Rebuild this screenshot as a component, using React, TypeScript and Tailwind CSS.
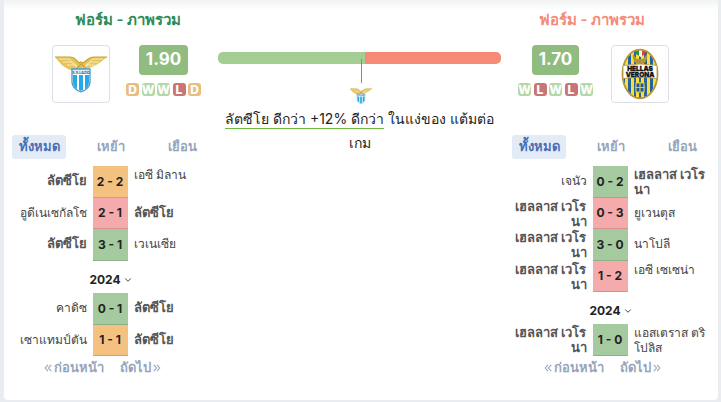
import { ChevronDown } from "lucide-react";

type Result = "W" | "D" | "L";
type Match = {
  home: string[];
  away: string[];
  score: string;
  result: Result;
  strong: "home" | "away";
};

const LAZIO = ["ลัตซีโย"];
const VERONA = ["เฮลลาส เวโร", "นา"];

const lazioRecent: Match[] = [
  { home: LAZIO, away: ["เอซี มิลาน", "\u00a0"], score: "2 - 2", result: "D", strong: "home" },
  { home: ["อูดีเนเซกัลโช"], away: LAZIO, score: "2 - 1", result: "L", strong: "away" },
  { home: LAZIO, away: ["เวเนเซีย"], score: "3 - 1", result: "W", strong: "home" },
];
const lazioOlder: Match[] = [
  { home: ["คาดิซ"], away: LAZIO, score: "0 - 1", result: "W", strong: "away" },
  { home: ["เซาแทมป์ตัน"], away: LAZIO, score: "1 - 1", result: "D", strong: "away" },
];
const veronaRecent: Match[] = [
  { home: ["เจนัว"], away: VERONA, score: "0 - 2", result: "W", strong: "away" },
  { home: VERONA, away: ["ยูเวนตุส"], score: "0 - 3", result: "L", strong: "home" },
  { home: VERONA, away: ["นาโปลี"], score: "3 - 0", result: "W", strong: "home" },
  { home: VERONA, away: ["เอซี เซเซน่า", "\u00a0"], score: "1 - 2", result: "L", strong: "home" },
];
const veronaOlder: Match[] = [
  { home: VERONA, away: ["แอสเตราส ตริ", "โปลิส"], score: "1 - 0", result: "W", strong: "home" },
];

const cellColor: Record<Result, string> = {
  W: "bg-[#a6ca9f] border-[#8db087]",
  D: "bg-[#f5c180] border-[#d2a264]",
  L: "bg-[#f5abab] border-[#d88f8f]",
};
const badgeColor: Record<Result, string> = {
  W: "bg-[#b5d6a7]",
  D: "bg-[#e9bd7c]",
  L: "bg-[#c87575]",
};

function LazioCrest({ className }: { className: string }) {
  return (
    <svg viewBox="0 0 52 52" className={className} aria-label="Lazio">
      <path d="M0 9h14c5 0 7 3 10 6l2-1 2 1c4-3 6-6 11-6h13l-5 4-4 3-4 2-5 2-5 1-3 2H18l-5-2-5-3-4-4Z" fill="#e5c45d" />
      <path d="M4 11h10l8 7M8 14h8l6 5M12 17h7l4 3M48 11H38l-8 7M44 14h-8l-6 5M40 17h-7l-4 3" stroke="#f8e9ae" fill="none" />
      <path d="M0 9h15c5 0 6 3 9 6l2-1 2 1c4-3 6-6 11-6h13M22 20l4-4 5 4" stroke="#c8a22f" fill="none" strokeWidth="1.2" />
      <path d="M17 21h18v13c0 5-4 8-9 10-5-2-9-5-9-10Z" fill="#fff" stroke="#4b98c5" strokeWidth="1.3" />
      <path d="M18 27h4v14c-3-2-4-4-4-7Zm12 0h4v7c0 3-1 5-4 7ZM24 27h4v15l-2 1-2-1Z" fill="#26a9e5" />
      <path d="M18 22h16v4H18Z" fill="#dceefa" />
      <text x="26" y="25.500" textAnchor="middle" fontSize="3.500" fontWeight="700" fill="#356583" fontFamily="Inter, sans-serif">S.S.LAZIO</text>
    </svg>
  );
}

function VeronaCrest({ className }: { className: string }) {
  return (
    <svg viewBox="0 0 52 52" className={className} aria-label="Hellas Verona">
      <clipPath id="shield"><ellipse cx="26" cy="26" rx="17" ry="24" /></clipPath>
      <g clipPath="url(#shield)">
        <path d="M8 0h36v52H8Z" fill="#2463a0" />
        <path d="M11 0h3v52h-3Zm6 0h3v52h-3Zm5 0h3v52h-3Zm5 0h3v52h-3Zm6 0h3v52h-3Zm6 0h3v52h-3Z" fill="#f7df3e" />
        <path d="M19 6c-1 6 2 10 7 11 5-1 8-5 7-11l-4 5h-6Z" fill="#b89335" />
        <path d="M22 1h3v7l-3-2Z" fill="#249552" />
        <path d="M25 1h3v7l-1.500 1L25 8Z" fill="#fff" />
        <path d="M28 1h3v5l-3 2Z" fill="#df3f38" />
        <path d="M22 35h8v9h-8Z" fill="#1d5b9c" />
        <path d="M21 39.500h10M26 34v10M22 35h8v9h-8Z" stroke="#e1c83b" fill="none" strokeWidth="1.200" />
      </g>
      <ellipse cx="26" cy="26" rx="17.500" ry="24.300" fill="none" stroke="#b8943d" strokeWidth="1.800" />
      <path d="M9 17.500q17-3 34 0v13q-17-3-34 0Z" fill="#fff" stroke="#b8943d" strokeWidth=".8" />
      <text x="26" y="22.500" textAnchor="middle" fontSize="6.500" fontWeight="900" fill="#111" stroke="#111" strokeWidth=".3" fontFamily="Inter, sans-serif">HELLAS</text>
      <text x="26" y="29" textAnchor="middle" fontSize="6.500" fontWeight="900" fill="#111" stroke="#111" strokeWidth=".3" fontFamily="Inter, sans-serif">VERONA</text>
    </svg>
  );
}

function DoubleChevron({ className = "" }: { className?: string }) {
  return (
    <svg viewBox="0 0 10 10" className={`h-2 w-2 ${className}`} fill="none" stroke="currentColor" strokeWidth="1.4" aria-hidden="true">
      <path d="M5 1 1.500 5 5 9M9 1 5.500 5 9 9" />
    </svg>
  );
}

function Rating({ value, form }: { value: string; form: Result[] }) {
  return (
    <div className="flex w-[75px] flex-col items-center gap-2">
      <div className="flex h-[30px] items-center rounded bg-[#90bc80] px-[7px] text-[17px] font-bold text-white">{value}</div>
      <div className="flex w-full justify-between">
        {form.map((r, i) => (
          <span key={i} className={`flex h-[13px] w-[13px] items-center justify-center rounded-[3px] text-xs font-extrabold text-white ${badgeColor[r]}`}>{r}</span>
        ))}
      </div>
    </div>
  );
}

function Crest({ team }: { team: "lazio" | "verona" }) {
  return (
    <div className="flex h-[58px] w-[58px] shrink-0 items-center justify-center rounded border border-[#dcdfe7]">
      {team === "lazio" ? <LazioCrest className="h-[52px] w-[52px]" /> : <VeronaCrest className="h-[52px] w-[52px]" />}
    </div>
  );
}

function TeamCell({ lines, strong, className }: { lines: string[]; strong: boolean; className: string }) {
  return (
    <td className={`p-0 ${className} ${strong ? "text-[13px] font-semibold text-[#555]" : "text-xs"} ${lines.length === 1 ? "pb-[3px]" : ""}`}>
      {lines.map((t, k) => <span key={k} className="block leading-[15px]">{t}</span>)}
    </td>
  );
}

function MatchTable({ items }: { items: Match[] }) {
  return (
    <table className="w-full table-fixed border-separate border-spacing-0 whitespace-nowrap text-[#444]">
      <tbody>
        {items.map((m, i) => (
          <tr key={i} className="h-8 even:h-[31px]">
            <TeamCell lines={m.home} strong={m.strong === "home"} className="pr-1.5 text-right" />
            <td className={`w-[35px] border-b p-0 text-center text-xs font-bold text-[#222] ${cellColor[m.result]}`}>{m.score}</td>
            <TeamCell lines={m.away} strong={m.strong === "away"} className="pl-1.5" />
          </tr>
        ))}
      </tbody>
    </table>
  );
}

function History({ recent, older }: { recent: Match[]; older: Match[] }) {
  return (
    <div>
      <div className="flex h-6 items-center justify-between text-[13px] font-semibold text-[#97a5bb]">
        <button className="h-6 w-[54px] rounded-[3px] bg-[#e3ecf6] whitespace-nowrap text-[#4a6db5]">ทั้งหมด</button>
        <button className="w-9">เหย้า</button>
        <button className="w-[52px]">เยือน</button>
      </div>
      <div className="mt-[7px]"><MatchTable items={recent} /></div>
      <button className="mx-auto flex h-8 items-center gap-0.5 pt-1.5 pl-0.5 text-xs font-bold text-[#222]">
        2024 <ChevronDown size={10} />
      </button>
      <MatchTable items={older} />
      <div className="flex h-6 items-center justify-center gap-4 pr-4 text-[13px] font-semibold text-[#97a5bb]">
        <button className="flex items-center gap-0.5"><DoubleChevron />ก่อนหน้า</button>
        <button className="flex items-center gap-0.5">ถัดไป<DoubleChevron className="rotate-180" /></button>
      </div>
    </div>
  );
}

export default function App() {
  return (
    <div className="bg-[#e9edf1] pr-[3px] pb-1 pl-1 font-['Inter','Noto_Sans',sans-serif]">
      <main className="flex rounded-b bg-white bg-linear-to-b from-[#f1f3f3] to-white to-[10px] pt-2 pr-2.5 pb-5 pl-2">
        <section className="w-[196px] shrink-0">
          <h2 className="pl-9 text-center text-[15px] leading-6 font-semibold text-[#2e8b57]">ฟอร์ม - ภาพรวม</h2>
          <div className="mt-[13px] mb-8 flex gap-4 pl-10">
            <Crest team="lazio" />
            <Rating value="1.90" form={["D", "W", "W", "L", "D"]} />
          </div>
          <History recent={lazioRecent} older={lazioOlder} />
        </section>
        <section className="min-w-0 flex-1 pt-11 pr-[11px] pl-2.5 text-center">
          <div className="flex h-3 overflow-hidden rounded-[5px]">
            <div className="w-[52%] bg-[#a3cd92]" />
            <div className="flex-1 bg-[#f58b76]" />
          </div>
          <div className="relative -mt-[5px] flex flex-col items-center pl-[3px]">
            <div className="h-6 w-px bg-[#888]" />
            <LazioCrest className="mt-0.5 h-[22px] w-[22px]" />
          </div>
          <p className="text-sm leading-6 text-[#222]">
            <span className="border-b border-[#6dbb3d] pb-px">ลัตซีโย ดีกว่า +12% ดีกว่า</span> ในแง่ของ แต้มต่อ<br />เกม
          </p>
        </section>
        <section className="w-[196px] shrink-0">
          <h2 className="pr-9 text-center text-[15px] leading-6 font-semibold text-[#f58b76]">ฟอร์ม - ภาพรวม</h2>
          <div className="mt-[13px] mb-8 flex justify-end gap-[18px] pr-[39px]">
            <Rating value="1.70" form={["W", "L", "W", "L", "W"]} />
            <Crest team="verona" />
          </div>
          <History recent={veronaRecent} older={veronaOlder} />
        </section>
      </main>
    </div>
  );
}
